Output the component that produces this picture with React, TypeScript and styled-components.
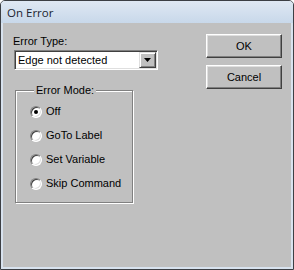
import React from 'react';
import styled, {createGlobalStyle} from "styled-components";

const Global = createGlobalStyle`
  html, body {
    margin: 0;
    padding: 0;
    background: #ffffff;
  }
  * {
    box-sizing: border-box;
  }
`

type RadioProps = {
    label: string
    checked?: boolean
}

const Radio = (props: RadioProps) => {
    return (
        <RadioRow>
            <RadioCircle>
                {props.checked && <RadioDot/>}
            </RadioCircle>
            <RadioText>{props.label}</RadioText>
        </RadioRow>
    );
};

export default function App() {
    return (
        <>
            <Global/>
            <Window>
                <TitleBar>On Error</TitleBar>
                <Client>
                    <LeftColumn>
                        <Label>Error Type:</Label>
                        <Select>
                            <SelectText>Edge not detected</SelectText>
                            <ArrowButton>
                                <svg width="7" height="4" viewBox="0 0 7 4">
                                    <path d="M0 0h7L3.5 4z" fill="#000"/>
                                </svg>
                            </ArrowButton>
                        </Select>
                        <Group>
                            <Legend>Error Mode:</Legend>
                            <Radio label={"Off"} checked/>
                            <Radio label={"GoTo Label"}/>
                            <Radio label={"Set Variable"}/>
                            <Radio label={"Skip Command"}/>
                        </Group>
                    </LeftColumn>
                    <RightColumn>
                        <Button>OK</Button>
                        <Button>Cancel</Button>
                    </RightColumn>
                </Client>
            </Window>
        </>
    );
}

const Window = styled.div`
  width: 294px;
  height: 270px;
  display: flex;
  flex-direction: column;
  border: 1px solid #3c3f44;
  border-radius: 5px 5px 0 0;
  background: #d8e2ee;
  padding: 0 2px 2px 2px;
  overflow: hidden;
`
const TitleBar = styled.div`
  height: 22px;
  display: flex;
  align-items: center;
  padding-left: 6px;
  margin: 0 -2px;
  background: linear-gradient(#dfe8f3, #c8d8ea);
  font-family: "Open Sans", "Noto Sans", sans-serif;
  font-size: 11.5px;
  color: #1b2430;
`
const Client = styled.div`
  flex: 1;
  display: flex;
  background: #c0c0c0;
  font-family: "Liberation Sans", Arial, sans-serif;
  font-size: 11px;
  color: #000;
`
const LeftColumn = styled.div`
  display: flex;
  flex-direction: column;
  padding: 12px 0 0 10px;
`
const Label = styled.div`
  line-height: 13px;
  height: 13px;
  margin-bottom: 2px;
`
const Select = styled.div`
  width: 144px;
  height: 20px;
  margin-left: 1px;
  display: flex;
  align-items: center;
  background: #fff;
  border: 1px solid;
  border-color: #808080 #fff #fff #808080;
  box-shadow: inset 1px 1px #404040, inset -1px -1px #dfdfdf;
  padding: 1px;
`
const SelectText = styled.div`
  flex: 1;
  padding-left: 2px;
  line-height: 13px;
`
const ArrowButton = styled.div`
  width: 17px;
  height: 16px;
  display: flex;
  align-items: center;
  justify-content: center;
  background: #c0c0c0;
  border: 1px solid;
  border-color: #dfdfdf #404040 #404040 #dfdfdf;
  box-shadow: inset 1px 1px #fff, inset -1px -1px #808080;

  svg {
    display: block;
  }
`
const Group = styled.fieldset`
  margin: 14px 0 0 2px;
  width: 118px;
  height: 119px;
  min-inline-size: 0;
  border: 1px solid #808080;
  box-shadow: inset 1px 1px #fff, 1px 1px #fff;
  padding: 8px 0 0 14px;
  display: flex;
  flex-direction: column;
  gap: 11px;
`
const Legend = styled.legend`
  padding: 0 2px;
  margin-left: 4px;
  line-height: 13px;
  background: #c0c0c0;
`
const RadioRow = styled.div`
  display: flex;
  align-items: center;
  height: 13px;
`
const RadioCircle = styled.div`
  width: 12px;
  height: 12px;
  border-radius: 50%;
  background: #fff;
  border: 1px solid;
  border-color: #808080 #fff #fff #808080;
  box-shadow: inset 1px 1px #404040, inset -1px -1px #dfdfdf;
  display: flex;
  align-items: center;
  justify-content: center;
`
const RadioDot = styled.div`
  width: 4px;
  height: 4px;
  border-radius: 50%;
  background: #000;
`
const RadioText = styled.span`
  margin-left: 4px;
  line-height: 13px;
`
const RightColumn = styled.div`
  margin-left: auto;
  margin-right: 9px;
  padding-top: 11px;
  display: flex;
  flex-direction: column;
  gap: 7px;
`
const Button = styled.button`
  width: 76px;
  height: 24px;
  padding: 0;
  background: #c0c0c0;
  font-family: "Liberation Sans", Arial, sans-serif;
  font-size: 11px;
  color: #000;
  border: 1px solid;
  border-color: #fff #404040 #404040 #fff;
  box-shadow: inset -1px -1px #808080, inset 1px 1px #dfdfdf;
`
